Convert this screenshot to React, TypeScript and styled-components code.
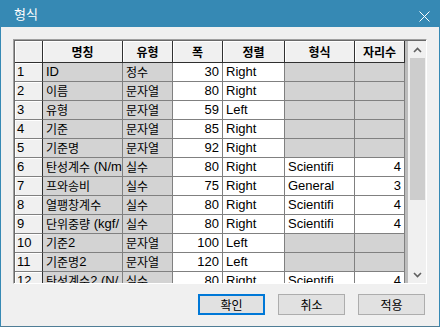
import React from "react";
import styled, { createGlobalStyle } from "styled-components";

const Global = createGlobalStyle`
  html, body { margin: 0; padding: 0; background: #f0f0f0; }
  * { box-sizing: border-box; }
`;

const COLS = [28, 80, 50, 50, 62, 70, 50];
const GRID = COLS.map((c) => `${c}px`).join(" ");

const Window = styled.div`
  width: 440px;
  height: 327px;
  display: flex;
  flex-direction: column;
  background: #f0f0f0;
  border-left: 1px solid #3689b4;
  border-right: 1px solid #3689b4;
  border-bottom: 1px solid #4f7d96;
`;

const TitleBar = styled.div`
  height: 27px;
  flex: none;
  background: #3689b4;
  display: flex;
  align-items: center;
  padding-left: 13px;
`;

const Title = styled.div`
  flex: 1;
  color: #fff;
  font-family: "Noto Sans CJK KR", sans-serif;
  font-size: 13px;
  line-height: 27px;
`;

const CloseBtn = styled.div`
  width: 30px;
  height: 27px;
  display: flex;
  justify-content: center;
  align-items: center;
  padding-top: 5px;
`;

const Body = styled.div`
  flex: 1;
  display: flex;
  flex-direction: column;
  padding: 12px 12px 0 12px;
`;

const GridFrame = styled.div`
  height: 245px;
  display: flex;
  border-top: 1px solid #a0a0a0;
  border-left: 1px solid #a0a0a0;
  border-right: 1px solid #ffffff;
  border-bottom: 1px solid #ffffff;
  box-shadow: inset 1px 1px 0 #696969;
  padding: 1px 0 0 1px;
`;

const TableArea = styled.div`
  flex: 1;
  overflow: hidden;
  background: #bcbcbc;
`;

const HeaderRow = styled.div`
  display: grid;
  grid-template-columns: ${GRID};
  height: 22px;
`;

const HeadCell = styled.div`
  background: #f0f0f0;
  border-right: 1px solid #303030;
  border-bottom: 1px solid #303030;
  box-shadow: inset 1px 1px 0 #ffffff;
  display: flex;
  align-items: center;
  justify-content: center;
  font-family: "Noto Sans CJK KR", sans-serif;
  font-size: 12px;
  font-weight: 700;
  color: #000;
  overflow: hidden;
  white-space: nowrap;
`;

const Row = styled.div`
  display: grid;
  grid-template-columns: ${GRID};
  height: 19px;
`;

const RowHead = styled.div`
  background: #f0f0f0;
  border-right: 1px solid #303030;
  border-bottom: 1px solid #808080;
  box-shadow: inset 1px 1px 0 #ffffff;
  padding-left: 2px;
  font-family: "Liberation Sans", sans-serif;
  font-size: 13px;
  line-height: 18px;
  color: #000;
`;

const Cell = styled.div<{ $gray?: boolean; $right?: boolean }>`
  background: ${(p) => (p.$gray ? "#d3d3d3" : "#ffffff")};
  border-right: 1px solid #808080;
  border-bottom: 1px solid #808080;
  padding: 0 ${(p) => (p.$right ? "3px" : "1px")} 0 ${(p) => (p.$right ? "2px" : "3px")};
  text-align: ${(p) => (p.$right ? "right" : "left")};
  font-family: "Liberation Sans", "Noto Sans CJK KR", sans-serif;
  font-size: 13px;
  line-height: 18px;
  color: #000;
  white-space: nowrap;
  overflow: hidden;
`;

const Ko = styled.span`
  font-family: "Noto Sans CJK KR", sans-serif;
  font-size: 12px;
  vertical-align: top;
  line-height: 18px;
`;

const ScrollBar = styled.div`
  width: 17px;
  flex: none;
  display: flex;
  flex-direction: column;
  background: #f0f0f0;
  margin-left: 1px;
`;

const ArrowBtn = styled.div`
  height: 17px;
  flex: none;
  display: flex;
  align-items: center;
  justify-content: center;
`;

const Track = styled.div`
  flex: 1;
  padding: 0 1px;
`;

const Thumb = styled.div`
  height: 142px;
  background: #cdcdcd;
`;

const ButtonBar = styled.div`
  display: flex;
  justify-content: flex-end;
  gap: 13px;
  margin-top: 10px;
  padding-right: 2px;
`;

const Button = styled.div<{ $primary?: boolean }>`
  width: 67px;
  height: 21px;
  background: #e1e1e1;
  border: ${(p) => (p.$primary ? "2px solid #0078d7" : "1px solid #adadad")};
  display: flex;
  align-items: center;
  justify-content: center;
  font-family: "Noto Sans CJK KR", sans-serif;
  font-size: 12px;
  color: #000;
`;

const HANGUL = /([\u3131-\u318E\uAC00-\uD7A3]+)/;
const Txt = ({ s }: { s: string }) => (
  <>
    {s.split(HANGUL).map((p, i) =>
      /[\u3131-\u318E\uAC00-\uD7A3]/.test(p) ? <Ko key={i}>{p}</Ko> : <React.Fragment key={i}>{p}</React.Fragment>
    )}
  </>
);

const HEAD = ["", "명칭", "유형", "폭", "정렬", "형식", "자리수"];

type R = [string, string, string, string, string, string];
const ROWS: R[] = [
  ["ID", "정수", "30", "Right", "", ""],
  ["이름", "문자열", "80", "Right", "", ""],
  ["유형", "문자열", "59", "Left", "", ""],
  ["기준", "문자열", "85", "Right", "", ""],
  ["기준명", "문자열", "92", "Right", "", ""],
  ["탄성계수 (N/m", "실수", "80", "Right", "Scientifi", "4"],
  ["프와송비", "실수", "75", "Right", "General", "3"],
  ["열팽창계수", "실수", "80", "Right", "Scientifi", "4"],
  ["단위중량 (kgf/", "실수", "80", "Right", "Scientifi", "4"],
  ["기준2", "문자열", "100", "Left", "", ""],
  ["기준명2", "문자열", "120", "Left", "", ""],
  ["탄성계수2 (N/", "실수", "80", "Right", "Scientifi", "4"],
];

const Chevron = ({ up }: { up?: boolean }) => (
  <svg width="9" height="6" viewBox="0 0 9 6">
    <polyline
      points={up ? "1,5 4.5,1.5 8,5" : "1,1 4.5,4.5 8,1"}
      fill="none"
      stroke="#606060"
      strokeWidth="1.6"
    />
  </svg>
);

export default function App() {
  return (
    <>
      <Global />
      <Window>
        <TitleBar>
          <Title>형식</Title>
          <CloseBtn>
            <svg width="11" height="11" viewBox="0 0 11 11">
              <path d="M0.5 0.5 L10.5 10.5 M10.5 0.5 L0.5 10.5" stroke="#fff" strokeWidth="1" />
            </svg>
          </CloseBtn>
        </TitleBar>
        <Body>
          <GridFrame>
            <TableArea>
              <HeaderRow>
                {HEAD.map((h, i) => (
                  <HeadCell key={i}>{h}</HeadCell>
                ))}
              </HeaderRow>
              {ROWS.map((r, i) => {
                const noFmt = r[4] === "";
                return (
                  <Row key={i}>
                    <RowHead>{i + 1}</RowHead>
                    <Cell $gray>
                      <Txt s={r[0]} />
                    </Cell>
                    <Cell $gray>
                      <Txt s={r[1]} />
                    </Cell>
                    <Cell $right>{r[2]}</Cell>
                    <Cell>{r[3]}</Cell>
                    <Cell $gray={noFmt}>{r[4]}</Cell>
                    <Cell $gray={noFmt} $right>
                      {r[5]}
                    </Cell>
                  </Row>
                );
              })}
            </TableArea>
            <ScrollBar>
              <ArrowBtn>
                <Chevron up />
              </ArrowBtn>
              <Track>
                <Thumb />
              </Track>
              <ArrowBtn>
                <Chevron />
              </ArrowBtn>
            </ScrollBar>
          </GridFrame>
          <ButtonBar>
            <Button $primary>확인</Button>
            <Button>취소</Button>
            <Button>적용</Button>
          </ButtonBar>
        </Body>
      </Window>
    </>
  );
}
